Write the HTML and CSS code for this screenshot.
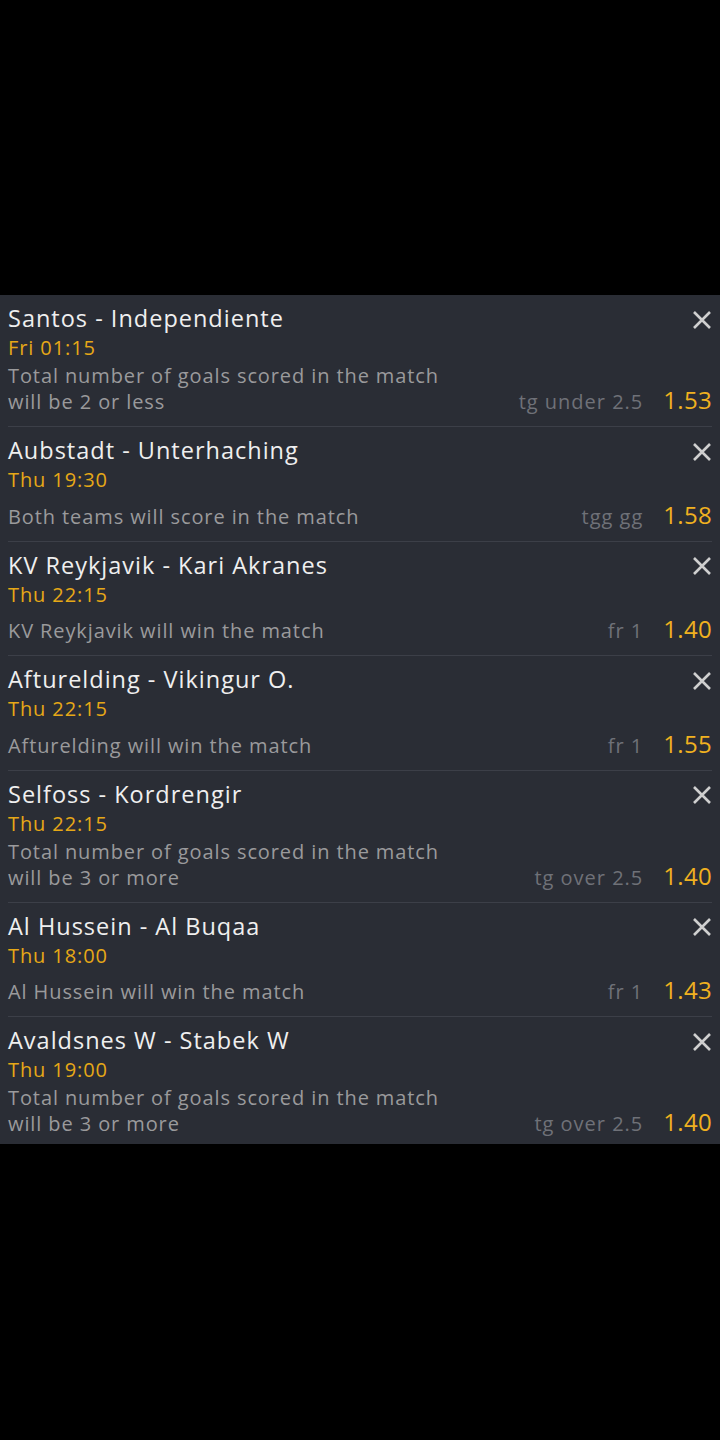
FILE: index.html
```html
<!DOCTYPE html>
<html lang="en">
<head>
<meta charset="utf-8">
<title>Bet slip</title>
<link rel="stylesheet" href="styles.css">
</head>
<body>
<main class="screen">
  <section class="slip">
    <article class="bet">
      <div class="head"><span class="match">Santos - Independiente</span><span class="close"><svg viewBox="0 0 20 20" width="20" height="20"><path d="M2 2 L18 18 M18 2 L2 18"/></svg></span></div>
      <div class="time">Fri 01:15</div>
      <div class="pick"><p class="desc">Total number of goals scored in the match will be 2 or less</p><div class="odds"><span class="mkt">tg under 2.5</span><span class="val">1.53</span></div></div>
    </article>
    <article class="bet">
      <div class="head"><span class="match">Aubstadt - Unterhaching</span><span class="close"><svg viewBox="0 0 20 20" width="20" height="20"><path d="M2 2 L18 18 M18 2 L2 18"/></svg></span></div>
      <div class="time">Thu 19:30</div>
      <div class="pick"><p class="desc">Both teams will score in the match</p><div class="odds"><span class="mkt">tgg gg</span><span class="val">1.58</span></div></div>
    </article>
    <article class="bet">
      <div class="head"><span class="match">KV Reykjavik - Kari Akranes</span><span class="close"><svg viewBox="0 0 20 20" width="20" height="20"><path d="M2 2 L18 18 M18 2 L2 18"/></svg></span></div>
      <div class="time">Thu 22:15</div>
      <div class="pick"><p class="desc">KV Reykjavik will win the match</p><div class="odds"><span class="mkt">fr 1</span><span class="val">1.40</span></div></div>
    </article>
    <article class="bet">
      <div class="head"><span class="match">Afturelding - Vikingur O.</span><span class="close"><svg viewBox="0 0 20 20" width="20" height="20"><path d="M2 2 L18 18 M18 2 L2 18"/></svg></span></div>
      <div class="time">Thu 22:15</div>
      <div class="pick"><p class="desc">Afturelding will win the match</p><div class="odds"><span class="mkt">fr 1</span><span class="val">1.55</span></div></div>
    </article>
    <article class="bet">
      <div class="head"><span class="match">Selfoss - Kordrengir</span><span class="close"><svg viewBox="0 0 20 20" width="20" height="20"><path d="M2 2 L18 18 M18 2 L2 18"/></svg></span></div>
      <div class="time">Thu 22:15</div>
      <div class="pick"><p class="desc">Total number of goals scored in the match will be 3 or more</p><div class="odds"><span class="mkt">tg over 2.5</span><span class="val">1.40</span></div></div>
    </article>
    <article class="bet">
      <div class="head"><span class="match">Al Hussein - Al Buqaa</span><span class="close"><svg viewBox="0 0 20 20" width="20" height="20"><path d="M2 2 L18 18 M18 2 L2 18"/></svg></span></div>
      <div class="time">Thu 18:00</div>
      <div class="pick"><p class="desc">Al Hussein will win the match</p><div class="odds"><span class="mkt">fr 1</span><span class="val">1.43</span></div></div>
    </article>
    <article class="bet">
      <div class="head"><span class="match">Avaldsnes W - Stabek W</span><span class="close"><svg viewBox="0 0 20 20" width="20" height="20"><path d="M2 2 L18 18 M18 2 L2 18"/></svg></span></div>
      <div class="time">Thu 19:00</div>
      <div class="pick"><p class="desc">Total number of goals scored in the match will be 3 or more</p><div class="odds"><span class="mkt">tg over 2.5</span><span class="val">1.40</span></div></div>
    </article>
  </section>
</main>
</body>
</html>
```

FILE: styles.css
```css
* { box-sizing: border-box; }
html, body {
  margin: 0;
  padding: 0;
  background: #000;
}
body {
  width: 720px;
  height: 1440px;
  font-family: "Open Sans", "Liberation Sans", sans-serif;
}
.screen {
  padding-top: 295px;
}
.slip {
  background: #2a2d35;
}
.bet {
  margin: 0 8px;
  padding: 8px 0 11px;
  border-bottom: 1px solid #3c3f48;
}
.bet:last-child {
  border-bottom: none;
  padding-bottom: 7px;
}
.head {
  display: flex;
  justify-content: space-between;
  align-items: center;
  height: 30px;
}
.match {
  color: #efefef;
  font-size: 23.5px;
  letter-spacing: 1px;
  line-height: 30px;
}
.close {
  display: flex;
  width: 20px;
  height: 20px;
  margin-top: 3px;
}
.close svg {
  stroke: #cfcfcf;
  stroke-width: 2.6;
  fill: none;
}
.time {
  color: #e6a817;
  font-size: 20px;
  letter-spacing: 0.9px;
  line-height: 30px;
}
.pick {
  display: flex;
  justify-content: space-between;
  align-items: flex-end;
  min-height: 34.5px;
}
.desc {
  margin: 0;
  max-width: 448px;
  color: #9a9a9c;
  font-size: 20px;
  letter-spacing: 0.9px;
  line-height: 26px;
}
.odds {
  display: flex;
  align-items: baseline;
  gap: 20px;
  white-space: nowrap;
}
.mkt {
  color: #6f7178;
  font-size: 20px;
  letter-spacing: 1px;
  line-height: 27px;
}
.val {
  color: #f0b120;
  font-size: 24px;
  letter-spacing: 0.3px;
  line-height: 27px;
}
```
